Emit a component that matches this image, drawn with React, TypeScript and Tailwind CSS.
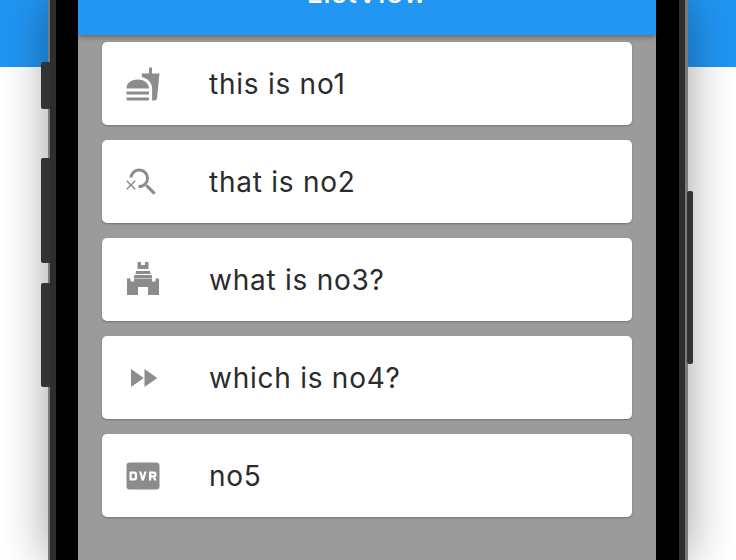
import { MdFastForward, MdFastfood, MdFiberDvr, MdSearchOff } from "react-icons/md";

function TowerIcon({ className }: { className?: string }) {
  return (
    <svg viewBox="0 0 36 36" fill="currentColor" className={className}>
      <path d="M12.500 0h3.500v3h4V0h3.500v7h-11z" />
      <path d="M11 9h14l.6 3H10.400z" />
      <path d="M9.500 13h17l.8 3H8.700z" />
      <path d="M2 16.500h3.500v3h3.500v-3h18v3h3.500v-3H34V33H23v-8H13v8H2z" />
    </svg>
  );
}

const items = [
  { label: "this is no1", Icon: MdFastfood },
  { label: "that is no2", Icon: MdSearchOff },
  { label: "what is no3?", Icon: TowerIcon },
  { label: "which is no4?", Icon: MdFastForward },
  { label: "no5", Icon: MdFiberDvr },
];

function Gutter() {
  return (
    <div className="w-[48px] shrink-0 flex flex-col">
      <div className="h-[67px] bg-[#2196f3] shadow-[0_2px_8px_rgba(0,0,0,0.15)]" />
      <div className="flex-1 bg-white" />
    </div>
  );
}

export default function App() {
  return (
    <div className="h-[560px] w-[736px] overflow-hidden flex bg-white font-['Inter',sans-serif]">
      <Gutter />
      <div className="relative z-10 w-[640px] shrink-0 flex border-l-2 border-r-[3px] border-[#7a7a7a] bg-[#2e2e2e] px-[6px] shadow-[0_0_44px_rgba(0,0,0,0.38)]">
        <div className="absolute left-[-9px] top-[62px] h-[47px] w-[9px] rounded-l-[2px] bg-[#333333]" />
        <div className="absolute left-[-9px] top-[158px] h-[105px] w-[9px] rounded-l-[2px] bg-[#333333]" />
        <div className="absolute left-[-9px] top-[283px] h-[104px] w-[9px] rounded-l-[2px] bg-[#333333]" />
        <div className="absolute right-[-8px] top-[191px] h-[173px] w-[6px] rounded-[2px] bg-[#333333]" />
        <div className="flex-1 flex bg-black pl-[22px] pr-[23px]">
          <div className="flex-1 flex flex-col bg-[#9b9b9b]">
            <div className="h-[35px] shrink-0 flex items-end justify-center bg-[#2196f3] shadow-[0_2px_5px_rgba(0,0,0,0.35)]">
              <span className="pb-[25px] text-[28px] leading-[34px] font-medium tracking-[0.9px] text-white">ListView</span>
            </div>
            <div className="flex flex-col gap-[15px] pt-[7px] px-[24px]">
              {items.map(({ label, Icon }) => (
                <div key={label} className="h-[83px] flex items-center rounded-[5px] bg-white pl-[23px] shadow-[0_1px_2px_rgba(0,0,0,0.25)]">
                  <Icon className="h-[36px] w-[36px] shrink-0 text-[#8c8c8c]" />
                  <span className="ml-[48px] text-[28px] leading-[34px] font-[380] tracking-[0.75px] text-[#2b2b2b]">{label}</span>
                </div>
              ))}
            </div>
          </div>
        </div>
      </div>
      <Gutter />
    </div>
  );
}
